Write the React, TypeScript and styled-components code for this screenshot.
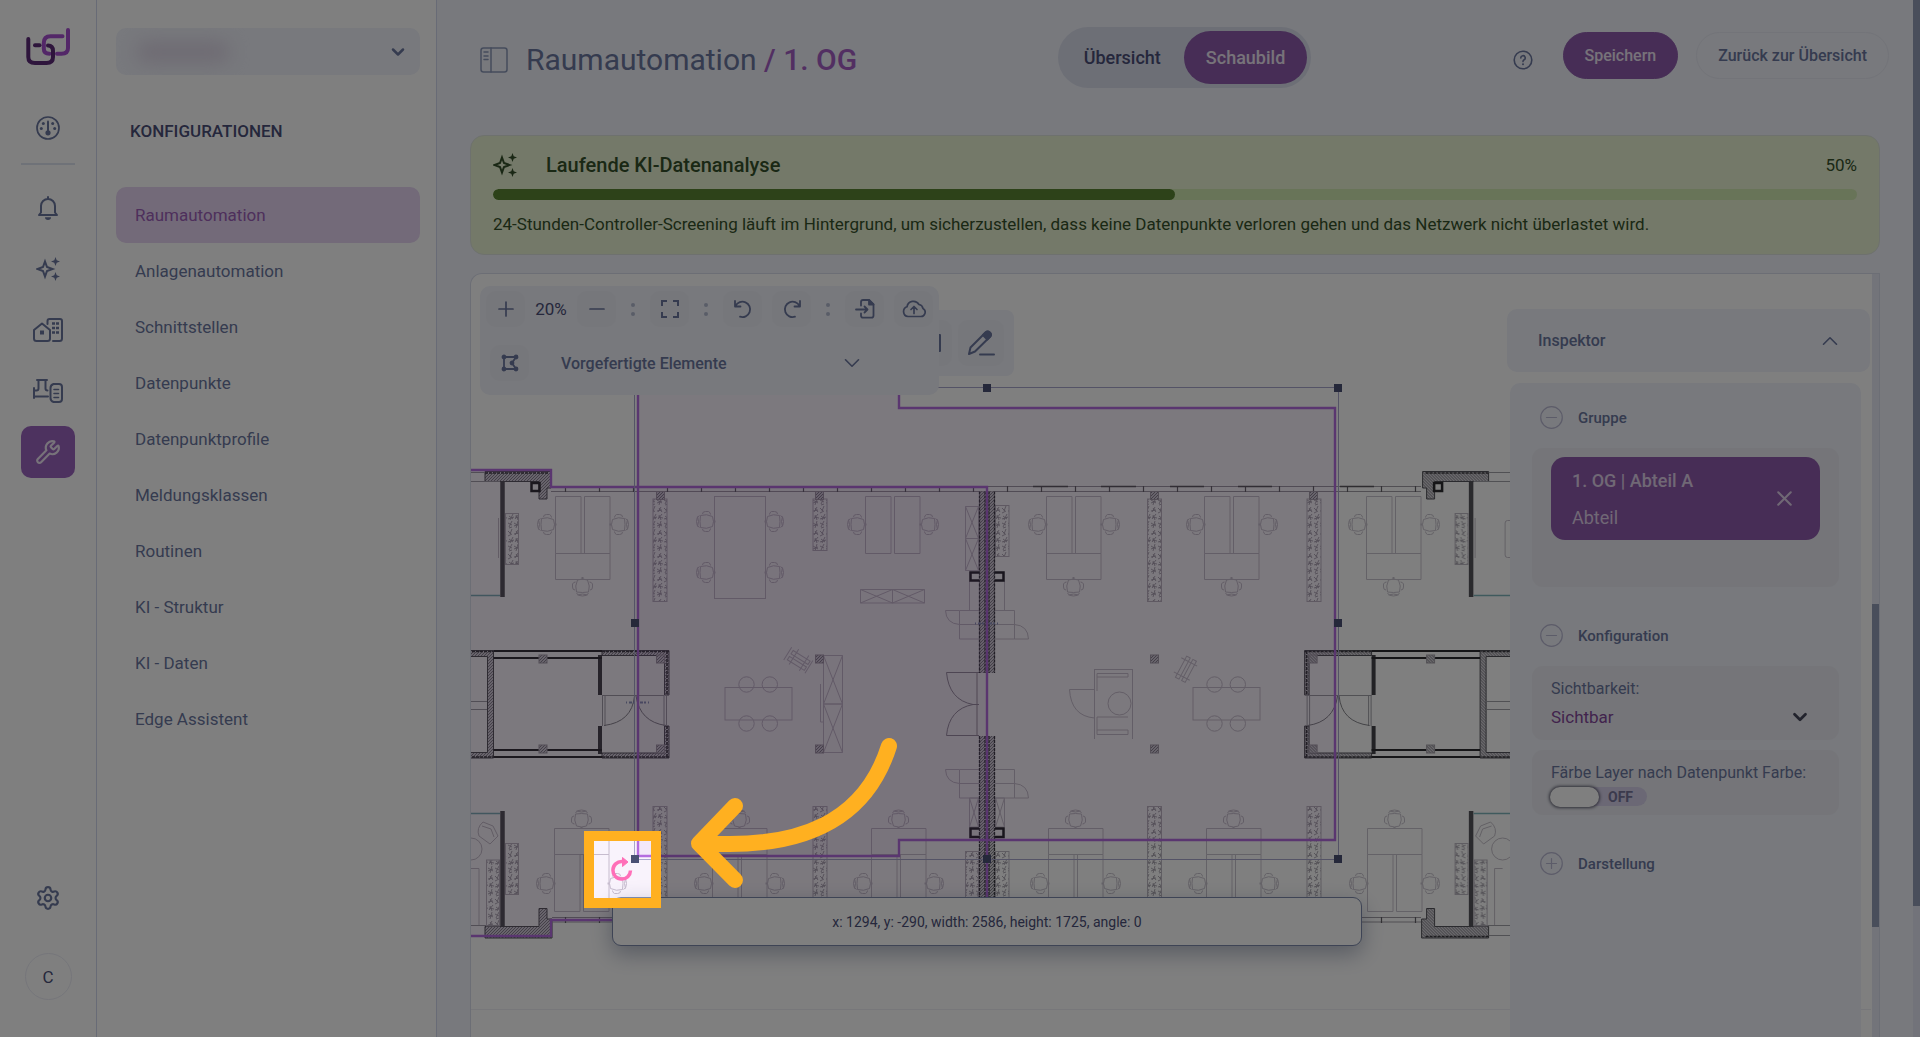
import React from "react";
import styled, { createGlobalStyle } from "styled-components";
import { Settings, Wrench, X, Plus, Minus, ChevronDown, ChevronUp } from "lucide-react";

const c = {
  ink: "#4b4f78",
  slate: "#6b779f",
  purple: "#8e5bac",
  violet: "#9c5fb8",
  page: "#f0f2fa",
  panel: "#f0f2fa",
  tile: "#eaebf2",
  green: "#35502a",
};

const Global = createGlobalStyle`
  *, *::before, *::after { box-sizing: border-box; }
  html, body { margin: 0; background: #fff; }
  body, button, select, input { font-family: Roboto, "Open Sans", sans-serif; }
  button { border: 0; padding: 0; cursor: pointer; }
  a { text-decoration: none; }
`;

const Page = styled.div`
  position: relative;
  display: flex;
  height: 100vh;
  overflow: hidden;
  background: #fff;
  color: ${c.slate};
`;

/* ---------- icon rail ---------- */

const Rail = styled.nav`
  flex: 0 0 97px;
  display: flex;
  flex-direction: column;
  align-items: center;
  padding: 28px 0 37px;
  border-right: 1px solid #d0d6ec;
`;

const Logo = styled.svg`
  width: 44px;
  height: 38px;
  margin-bottom: 36px;
`;

const RailLink = styled.a<{ $active?: boolean }>`
  display: flex;
  align-items: center;
  justify-content: center;
  width: 54px;
  height: 52px;
  margin-bottom: 9px;
  border-radius: 10px;
  color: ${(p) => (p.$active ? "#efe6f4" : c.slate)};
  background: ${(p) => (p.$active ? "#9b64bf" : "transparent")};
`;

const RailRule = styled.hr`
  width: 54px;
  height: 2px;
  margin: 0 0 17px;
  border: 0;
  background: #dfe5f0;
`;

const RailSpacer = styled.div`
  flex: 1;
`;

const Avatar = styled.button`
  width: 47px;
  height: 47px;
  margin-top: 20px;
  border: 1px solid #ebecf5;
  border-radius: 50%;
  background: transparent;
  color: ${c.ink};
  font-size: 17px;
`;

/* ---------- sidebar ---------- */

const Sidebar = styled.aside`
  flex: 0 0 340px;
  display: flex;
  flex-direction: column;
  padding: 28px 16px 0 19px;
  border-right: 1px solid #d0d6ec;
`;

const SitePicker = styled.div`
  position: relative;
  display: flex;
  align-items: center;
  height: 47px;
  border-radius: 10px;
  background: ${c.page};
  overflow: hidden;
`;

const SiteSelect = styled.select`
  appearance: none;
  width: 100%;
  height: 100%;
  padding: 0 40px 0 16px;
  border: 0;
  background: transparent;
  color: ${c.slate};
  font-size: 17px;
`;

const SiteBlur = styled.span`
  position: absolute;
  left: 20px;
  top: 13px;
  width: 94px;
  height: 22px;
  border-radius: 11px;
  background: #ddd6e6;
  filter: blur(9px);
  pointer-events: none;
`;

const PickerArrow = styled.span`
  position: absolute;
  right: 12px;
  display: flex;
  pointer-events: none;
`;

const SidebarTitle = styled.h2`
  margin: 44px 0 44px 14px;
  color: ${c.ink};
  font-size: 17px;
  font-weight: 500;
  line-height: 24px;
`;

const NavItem = styled.a<{ $active?: boolean }>`
  display: flex;
  align-items: center;
  height: 56px;
  padding-left: 19px;
  border-radius: 10px;
  font-size: 17px;
  color: ${(p) => (p.$active ? c.violet : c.slate)};
  background: ${(p) => (p.$active ? "#e6d4f2" : "transparent")};
`;

/* ---------- main column ---------- */

const Main = styled.main`
  flex: 1;
  min-width: 0;
  display: flex;
  flex-direction: column;
  padding: 27px 33px 0;
  background: ${c.page};
`;

const Header = styled.header`
  display: grid;
  grid-template-columns: 1fr auto 1fr;
  height: 108px;
  margin-right: -9px;
  padding-left: 10px;
  align-items: start;
`;

const TitleGroup = styled.div`
  display: flex;
  align-items: center;
  gap: 18px;
  height: 65px;
`;

const Title = styled.h1`
  margin: 0;
  font-size: 30px;
  font-weight: 400;
  line-height: 40px;
  white-space: nowrap;
  color: ${c.slate};
`;

const TitleAccent = styled.span`
  font-weight: 500;
  color: #a55fc4;
`;

const Tabs = styled.div`
  display: flex;
  gap: 1px;
  padding: 4px;
  border-radius: 31px;
  background: #dadeed;
`;

const Tab = styled.button<{ $active?: boolean }>`
  height: 53px;
  padding: 0 22px;
  border-radius: 27px;
  font-size: 18px;
  font-weight: 500;
  color: ${(p) => (p.$active ? "#efe6f4" : c.ink)};
  background: ${(p) => (p.$active ? c.purple : "transparent")};
`;

const Actions = styled.div`
  display: flex;
  align-items: center;
  justify-content: flex-end;
  gap: 18px;
  padding-top: 5px;
`;

const HelpButton = styled.button`
  display: flex;
  margin: 8px 12px 0 0;
  background: transparent;
  color: ${c.slate};
`;

const Pill = styled.button<{ $primary?: boolean }>`
  height: 47px;
  padding: 0 21px;
  border: 1px solid ${(p) => (p.$primary ? c.purple : "#e6e8f2")};
  border-radius: 24px;
  font-size: 16px;
  font-weight: 500;
  white-space: nowrap;
  color: ${(p) => (p.$primary ? "#efe6f4" : c.slate)};
  background: ${(p) => (p.$primary ? c.purple : "transparent")};
`;

/* ---------- analysis banner ---------- */

const Banner = styled.section`
  display: flex;
  flex-direction: column;
  height: 120px;
  padding: 15px 22px 0;
  border: 1px solid #dde3dc;
  border-radius: 14px;
  background: #e8f2d2;
  color: ${c.green};
`;

const BannerHead = styled.div`
  display: flex;
  align-items: center;
  height: 27px;
`;

const BannerTitle = styled.h2`
  flex: 1;
  margin: 0 0 0 29px;
  font-size: 20px;
  font-weight: 500;
`;

const Percent = styled.span`
  font-size: 17px;
`;

const Progress = styled.progress`
  appearance: none;
  width: 100%;
  height: 11px;
  margin: 11px 0 12px;
  border: 0;
  border-radius: 6px;
  overflow: hidden;
  background: #d0e8b0;
  &::-webkit-progress-bar {
    background: #d0e8b0;
  }
  &::-webkit-progress-value {
    border-radius: 6px;
    background: #5a8433;
  }
`;

const BannerText = styled.p`
  margin: 0;
  font-size: 17px;
  line-height: 24px;
`;

/* ---------- canvas ---------- */

const Canvas = styled.section`
  flex: 1;
  min-height: 0;
  display: flex;
  margin-top: 18px;
  border: 1px solid #d8dceb;
  border-bottom: 0;
  border-radius: 12px 0 0 0;
  background: #fff;
`;

const Stage = styled.div`
  position: relative;
  flex: 1;
  display: flex;
  justify-content: space-between;
  padding: 12px 2px 0 9px;
  overflow: hidden;
`;

const Plan = styled.svg`
  position: absolute;
  left: 0;
  top: 0;
  width: 1400px;
  height: 764px;
`;

const Toolbar = styled.div`
  position: relative;
  width: 459px;
  height: 109px;
  padding: 5px 5px 0 6px;
  border-radius: 10px;
  background: ${c.panel};
`;

const ToolRow = styled.div`
  display: flex;
  align-items: center;
  gap: 10px;
`;

const PresetRow = styled.div`
  display: flex;
  align-items: center;
  margin-top: 18px;
  padding: 0 69px 0 4px;
`;

const ToolButton = styled.button<{ $large?: boolean }>`
  display: flex;
  align-items: center;
  justify-content: center;
  flex: none;
  width: ${(p) => (p.$large ? 46 : 39)}px;
  height: ${(p) => (p.$large ? 46 : 36)}px;
  border-radius: 10px;
  background: #edeef6;
  color: ${c.slate};
`;

const Zoom = styled.span`
  width: 32px;
  text-align: center;
  font-size: 17px;
  white-space: nowrap;
  color: ${c.ink};
`;

const Dots = styled.span`
  display: flex;
  flex-direction: column;
  gap: 5px;
  width: 4px;
  margin: 0 5px;
  &::before,
  &::after {
    content: "";
    height: 4px;
    border-radius: 50%;
    background: #b3bacf;
  }
`;

const PresetButton = styled.button`
  flex: 1;
  display: flex;
  align-items: center;
  justify-content: space-between;
  margin-left: 32px;
  background: transparent;
  color: ${c.slate};
  font-size: 16px;
  font-weight: 500;
`;

const DrawBar = styled.div`
  position: absolute;
  left: 420px;
  top: 36px;
  display: flex;
  gap: 6px;
  width: 123px;
  height: 66px;
  padding: 10px 10px 0 15px;
  border-radius: 8px;
  background: ${c.panel};
`;

const Inspector = styled.aside`
  position: relative;
  display: flex;
  flex-direction: column;
  align-items: flex-start;
  width: 363px;
  padding-top: 23px;
`;

const InspectorHead = styled.button`
  display: flex;
  align-items: center;
  justify-content: space-between;
  width: 100%;
  height: 63px;
  padding: 0 27px 0 31px;
  border-radius: 10px;
  background: ${c.panel};
  color: ${c.slate};
  font-size: 16px;
  font-weight: 500;
`;

const InspectorBody = styled.div`
  flex: 1;
  width: 351px;
  margin: 11px 0 0 3px;
  padding: 17px 22px 0;
  border-radius: 10px 10px 0 0;
  background: ${c.panel};
`;

const Section = styled.button`
  display: flex;
  align-items: center;
  gap: 15px;
  height: 35px;
  padding-left: 8px;
  background: transparent;
  color: ${c.slate};
  font-size: 15px;
  font-weight: 500;
`;

const Box = styled.div<{ $h: number; $after: number }>`
  height: ${(p) => p.$h}px;
  margin-bottom: ${(p) => p.$after}px;
  padding: 9px 19px;
  border-radius: 11px;
  background: ${c.tile};
`;

const GroupBox = styled(Box)`
  margin-top: 13px;
`;

const Chip = styled.div`
  display: flex;
  align-items: center;
  justify-content: space-between;
  height: 83px;
  padding: 0 23px 0 21px;
  border-radius: 14px;
  background: ${c.purple};
  color: #e0d0ea;
`;

const ChipText = styled.div`
  font-size: 18px;
  line-height: 37px;
`;

const ChipName = styled.div`
  font-weight: 500;
`;

const ChipClose = styled.button`
  display: flex;
  background: transparent;
  color: #e0d0ea;
`;

const Field = styled.label`
  display: block;
  padding-top: 2px;
  font-size: 16px;
  line-height: 24px;
  white-space: nowrap;
`;

const SelectWrap = styled.div`
  display: flex;
  align-items: center;
  padding-top: 4px;
`;

const Select = styled.select`
  appearance: none;
  flex: 1;
  height: 24px;
  margin-right: -20px;
  padding: 0;
  border: 0;
  background: transparent;
  color: #84479a;
  font-size: 17px;
`;

const SelectIcon = styled.span`
  display: flex;
  margin-right: 9px;
  color: #44465a;
  pointer-events: none;
`;

const Switch = styled.label`
  display: flex;
  align-items: center;
  width: 96px;
  height: 19px;
  margin-top: 2px;
  border-radius: 10px;
  background: #d6d0ea;
`;

const SwitchInput = styled.input`
  appearance: none;
  width: 49px;
  height: 20px;
  margin: 0 9px 0 -1px;
  border-radius: 10px;
  background: #fff;
  box-shadow: 0 0 3px 1px rgba(40, 40, 60, 0.7);
`;

const SwitchText = styled.span`
  font-size: 14px;
  font-weight: 700;
  color: #77759a;
`;

const InfoBar = styled.div`
  position: absolute;
  left: 141px;
  top: 623px;
  display: flex;
  align-items: center;
  justify-content: center;
  width: 750px;
  height: 49px;
  border: 1px solid #7c89ab;
  border-radius: 9px;
  background: #fff;
  box-shadow: 0 8px 22px rgba(60, 75, 110, 0.4);
  color: ${c.ink};
  font-size: 14px;
`;

const InnerTrack = styled.div`
  flex: 0 0 7px;
  padding-top: 330px;
  background: #e6e8f4;
`;

const InnerThumb = styled.div`
  height: 323px;
  background: #929cb6;
`;

const OuterTrack = styled.div`
  flex: 0 0 7px;
  background: #e4e6f4;
`;

const OuterThumb = styled.div`
  height: 906px;
  background: #929cb6;
`;

/* ---------- tour spotlight ---------- */

const Spotlight = styled.div`
  position: absolute;
  left: 584px;
  top: 831px;
  width: 77px;
  height: 77px;
  border: 10px solid #ffb020;
  box-shadow: 0 0 0 3000px rgba(0, 0, 0, 0.5);
  pointer-events: none;
`;

const TourArrow = styled.svg`
  position: absolute;
  left: 680px;
  top: 730px;
  width: 230px;
  height: 170px;
  pointer-events: none;
`;

/* ---------- icons ---------- */

const stroke = {
  fill: "none",
  stroke: "currentColor",
  strokeWidth: 2,
  strokeLinecap: "round" as const,
  strokeLinejoin: "round" as const,
};

const LogoMark = () => (
  <Logo viewBox="26 28 44 38" {...stroke} strokeWidth={4} aria-label="Logo" role="img">
    <path d="M62.5 36.3H50.5Q43.8 36.3 43.8 43V48.5Q43.8 53.8 49.5 53.8" stroke="#a64fd0" />
    <path d="M57 53.8H61.5Q68 53.8 68 48V30" stroke="#a64fd0" />
    <path d="M28.3 39V57Q28.3 63 35 63H46.5Q53 63 53 57V51Q53 45.5 48 45.5" stroke="#5c2a78" />
    <path d="M35 45.3H39.5" stroke="#5c2a78" />
  </Logo>
);

const GaugeIcon = () => (
  <svg width="24" height="24" viewBox="0 0 24 24" {...stroke}>
    <circle cx="12" cy="12" r="11" strokeWidth="1.7" />
    <path d="M12 5.5V15" />
    <circle cx="12" cy="16.8" r="2.6" fill="currentColor" stroke="none" />
    {[[5.3, 12.5], [18.7, 12.5], [7.3, 7.5], [16.7, 7.5]].map(([x, y]) => (
      <circle key={x} cx={x} cy={y} r="1.5" fill="currentColor" stroke="none" />
    ))}
  </svg>
);

const BellIcon = () => (
  <svg width="24" height="24" viewBox="0 0 24 24" {...stroke}>
    <path d="M12 1V3M3 19H21L19 16.5V10A7 7 0 0 0 5 10V16.5Z" />
    <path d="M9 21.3H15A3 2.7 0 0 1 9 21.3Z" fill="currentColor" stroke="none" />
  </svg>
);

const SparkIcon = () => (
  <svg width="24" height="24" viewBox="0 0 24 24" {...stroke}>
    <path d="M9 4.5L11 10L16.5 12L11 14L9 19.5L7 14L1.5 12L7 10Z" strokeLinejoin="miter" />
    <path
      d="M19.5 0L20.7 3.3L24 4.5L20.7 5.7L19.5 9L18.3 5.7L15 4.5L18.3 3.3ZM19.5 15L20.7 18.3L24 19.5L20.7 20.7L19.5 24L18.3 20.7L15 19.5L18.3 18.3Z"
      fill="currentColor"
      stroke="none"
    />
  </svg>
);

const BuildingIcon = () => (
  <svg width="30" height="24" viewBox="0 0 30 24" {...stroke}>
    <path d="M1 12L9 5.5L17 12V20.5Q17 23 14.5 23H3.5Q1 23 1 20.5Z" />
    <path d="M14.5 6V3Q14.5 1 16.5 1H27Q29 1 29 3V20.5Q29 23 26.5 23H20" />
    <rect x="7" y="12.5" width="4" height="4" fill="currentColor" stroke="none" />
    {[5.5, 10, 14.5].map((y) => (
      <path key={y} d={`M19 ${y}h3M23 ${y}h3`} strokeWidth="2.5" strokeLinecap="butt" />
    ))}
  </svg>
);

const PlantIcon = () => (
  <svg width="30" height="24" viewBox="0 0 30 24" {...stroke}>
    <path d="M4 1H14M5.5 1V9.5Q5.5 11.5 3.5 11.5H1.5M12.5 1V9.5Q12.5 11.5 14.5 11.5M1 9V19M1 17.5H15" />
    <path d="M20.5 5H26Q29 5 29 8V20Q29 23 26 23H20.5Q17.5 22 17.5 19V9Q17.5 6 20.5 5Z" />
    <path d="M21 10.5H25.5M21 14.5H25.5M21 18.5H25.5" strokeWidth="1.6" />
  </svg>
);

const PanelIcon = () => (
  <svg width="28" height="26" viewBox="0 0 28 26" {...stroke} strokeWidth={1.5} color="#8b98b8">
    <rect x="1" y="1" width="26" height="24" rx="2.5" />
    <path d="M11 1V25M4 5H8M4 9H8M4 12.5H8" />
  </svg>
);

const HelpIcon = () => (
  <svg width="20" height="20" viewBox="0 0 20 20" {...stroke} strokeWidth={1.6}>
    <circle cx="10" cy="10" r="8.8" />
    <path d="M7.8 8A2.2 2.2 0 1 1 10.8 9.9Q10 10.4 10 11.6" />
    <circle cx="10" cy="14.3" r="1" fill="currentColor" stroke="none" />
  </svg>
);

const FrameIcon = () => (
  <svg width="18" height="18" viewBox="0 0 18 18" {...stroke} strokeLinecap="butt" strokeLinejoin="miter">
    <path d="M1 6V1H6M12 1H17V6M17 12V17H12M6 17H1V12" />
  </svg>
);

const UndoIcon = ({ flip }: { flip?: boolean }) => (
  <svg width="20" height="20" viewBox="0 0 20 20" {...stroke} strokeWidth={1.8}>
    <g transform={flip ? "translate(20 0) scale(-1 1)" : undefined}>
      <path d="M2 2V7.5H7.5M2.5 7A7.7 7.7 0 1 1 7 17.7" />
    </g>
  </svg>
);

const ImportIcon = () => (
  <svg width="20" height="20" viewBox="0 0 20 20" {...stroke} strokeWidth={1.8}>
    <path d="M6 6.5V3Q6 1 8 1H14L18.5 5.5V16.5Q18.5 18.7 16.5 18.7H8Q6 18.7 6 16.5V14.5" />
    <path d="M14 1V5.5H18.5Z" fill="currentColor" />
    <path d="M1 10.5H12M9.5 7.5L12.5 10.5L9.5 13.5" />
  </svg>
);

const CloudIcon = () => (
  <svg width="24" height="20" viewBox="0 0 24 20" {...stroke} strokeWidth={1.7}>
    <path d="M6 17.5A5 5 0 0 1 5 7.8A6.5 6.5 0 0 1 17 5.5A5 5 0 0 1 21 9.5A4.3 4.3 0 0 1 18.5 17.5Z" />
    <path d="M12 14.5V8M9 10.5L12 7.5L15 10.5" />
  </svg>
);

const PolygonIcon = () => (
  <svg width="18" height="18" viewBox="0 0 18 18" {...stroke} strokeWidth={1.8}>
    <path d="M3 3H15L11 9L15 15H3Z" />
    {[[3, 3], [15, 3], [3, 15], [15, 15], [11, 9]].map(([x, y]) => (
      <circle key={`${x}-${y}`} cx={x} cy={y} r="1.5" fill="currentColor" />
    ))}
  </svg>
);

const PencilIcon = () => (
  <svg width="28" height="26" viewBox="0 0 28 26" {...stroke}>
    <path d="M2 24L3.5 17.5L18.5 2.5Q20.5 0.8 22.5 2.5Q25 4.5 23 6.8L8 21.5Z" />
    <path d="M16 5L18.8 2.2Q20.8 0.5 23 2.5Q25 4.8 23 6.8L20.3 9.5Z" fill="currentColor" />
    <path d="M13 24.5H27" />
  </svg>
);

const CircleIcon = ({ plus }: { plus?: boolean }) => (
  <svg width="23" height="23" viewBox="0 0 23 23" {...stroke} strokeWidth={1.2} color="#b9b8d2">
    <circle cx="11.5" cy="11.5" r="10.8" />
    <path d={plus ? "M6.5 11.5H16.5M11.5 6.5V16.5" : "M6.5 11.5H16.5"} />
  </svg>
);

/* ---------- floor plan ---------- */

const Chair = ({ x, y, r = 0 }: { x: number; y: number; r?: number }) => (
  <g transform={`translate(${x} ${y}) rotate(${r})`}>
    <path d="M-5 -6Q1 -8 7 -5Q9 0 7 5Q1 8 -5 6Q-6 0 -5 -6Z" />
    <path d="M-6 -6Q-9 -5 -9 0T-6 6M-8 -5Q-6 0 -8 5M-3 -7.5Q-3 -10 0 -10H3Q5 -9 5 -7M-3 7.5Q-3 10 0 10H3Q5 9 5 7" />
    <path d="M8 0H10" strokeWidth="2" />
  </g>
);

const Desk = ({ x, chairs = true }: { x: number; chairs?: boolean }) => (
  <g>
    <path d={`M${x} 496.5h25.5v57h-25.5zM${x + 29} 496.5h25.5v57h-25.5z`} />
    <Chair x={x - 9} y={524.5} />
    <Chair x={x + 64} y={524.5} r={180} />
    {chairs && (
      <>
        <path d={`M${x} 553.5h54.5v26h-54.5z`} />
        <Chair x={x + 27} y={587} r={-90} />
      </>
    )}
  </g>
);

const LowDesk = ({ x }: { x: number }) => (
  <g>
    <path d={`M${x} 828.5h54.5v26h-54.5zM${x} 854.5h25.5v57h-25.5zM${x + 29} 854.5h25.5v57h-25.5z`} />
    <Chair x={x + 27} y={819} r={90} />
    <Chair x={x - 9} y={883.5} />
    <Chair x={x + 63} y={883.5} r={180} />
  </g>
);

const Crossed = ({ x, y, w, h }: { x: number; y: number; w: number; h: number }) => (
  <path d={`M${x} ${y}h${w}v${h}h${-w}zl${w} ${h}M${x + w} ${y}l${-w} ${h}`} />
);

const RoundTable = ({ x }: { x: number }) => (
  <g>
    <rect x={x} y="687.5" width="67" height="32.5" />
    {[21.5, 44.8].map((d) => (
      <g key={d}>
        <circle cx={x + d} cy="684.5" r="7.7" />
        <circle cx={x + d} cy="723.5" r="7.7" />
      </g>
    ))}
  </g>
);

/* Outer walls, stair core and meeting rooms of one wing; the other wing mirrors it. */
const Wing = () => (
  <g>
    <g fill="url(#hatch)" stroke="#55555c" strokeWidth="1">
      <path d="M485 471.5H551V488H547V499H539V481.5H485Z" />
      <path d="M485 938H552V919H547V908.5H539V926.5H485Z" />
      <path d="M460 650.5H493.5V758H460V752.5H487.5V656.5H460Z" />
      <path d="M602 650.5H669V695H664.5V655.5H602Z" />
      <path d="M602 758H669V726H664.5V753H602Z" />
    </g>
    <path
      d="M485 473H549M485 936.5H549M667 651V695M667 726V757M602 651.5H669M602 757H669M460 651.5H493M460 757H493"
      stroke="#3c3c42"
      strokeWidth="1.6"
      strokeDasharray="3 1"
    />
    <g stroke="#2c2c30" fill="none">
      <path d="M502.5 482V597M502.5 811V927" stroke="#54545a" strokeWidth="4.5" />
      <path d="M600 655V695M600 726V754" stroke="#44444a" strokeWidth="4" />
      <path d="M493.5 651H602M493.5 658H602M493.5 750H602M493.5 757H602" strokeWidth="2" />
      <rect x="531.5" y="483" width="8" height="8" strokeWidth="2.5" />
    </g>
    <g stroke="#a2a2a8" fill="none">
      <path d="M460 472.5H485M460 481.5H500M460 701.5H487M460 709.5H487M460 925.5H500M460 935.5H485" />
      <path d="M602 695.5H664M602.5 695V726M605 695V726M664 695V726M666.5 695V726" />
      <path d="M634.5 696Q632 722 604 725.5M636 696Q640 722 666 725.5" stroke="#88888e" />
    </g>
    <path d="M460 595.5H500M460 813.5H500" stroke="#7fb4ba" strokeWidth="1.5" />
    <g fill="url(#plants)" stroke="#bfbac4">
      <rect x="505.5" y="513.5" width="13" height="51" />
      <rect x="505.5" y="843.5" width="13" height="51" />
      <rect x="486.5" y="860" width="13" height="66" />
    </g>
    <g stroke="#c6c1ca" fill="none">
      <path d="M483 822L493 826L498 836L490 844L479 836Q476 828 483 822ZM482 826L491 829L494 837" />
      <circle cx="471" cy="849" r="11" />
      <path d="M471 868.5H479V925M498.5 518V558" />
    </g>
    <g fill="url(#hatch)" stroke="#a5a1a9">
      <rect x="539" y="655" width="8" height="8" />
      <rect x="656.5" y="655" width="8" height="8" />
      <rect x="539" y="745" width="8" height="8" />
      <rect x="656.5" y="745" width="8" height="8" />
    </g>
  </g>
);

const ticks = Array.from({ length: 26 }, (_, i) => 565.5 + i * 34);
const handles = [
  [987, 388],
  [1338, 388],
  [635, 623],
  [1338, 623],
  [635, 859],
  [987, 859],
  [1338, 859],
];

const FloorPlan = () => (
  <Plan viewBox="471 274 1400 764" role="img" aria-label="Grundriss 1. OG">
    <defs>
      <pattern id="hatch" width="3" height="3" patternUnits="userSpaceOnUse">
        <rect width="3" height="3" fill="#d4d2d8" />
        <path d="M0 3L3 0" stroke="#85838b" strokeWidth="1" />
      </pattern>
      <pattern id="plants" width="13" height="23" patternUnits="userSpaceOnUse">
        <path
          d="M1 2l3 3M5 0l-2 5M1 7l4 -2M9 2l3 4M11 1l-3 5M7 5l5 -1M2 10l4 3M6 8l-3 6M1 13l6 -2M9 9l2 5M12 8l-4 5M8 11l5 1M1 17l4 2M5 15l-3 6M7 17l5 3M11 15l-2 7M7 20l5 -2M2 22l3 -1"
          stroke="#a6a1ab"
          strokeWidth="0.9"
          fill="none"
        />
      </pattern>
      <clipPath id="sheet">
        <rect x="471" y="274" width="1042" height="764" />
      </clipPath>
    </defs>
    <path d="M471 1009.5H1872" stroke="#efeff4" />
    <g clipPath="url(#sheet)">
      <Wing />
      <g transform="translate(1973.6 0) scale(-1 1)">
        <Wing />
        <path d="M460 520.5H466Q468.5 520.5 468.5 523V555Q468.5 557.5 466 557.5H460" stroke="#c6c1ca" fill="none" />
      </g>

      <g stroke="#a29ea6" fill="none">
        <path d="M551 486.5H1421M551 491.5H1421" />
        <path d="M552 917.5H1421M552 922H1421" />
        {ticks.map((x) => (
          <path key={x} d={`M${x} 486V492M${x} 917V923`} stroke="#66646a" strokeWidth="1.2" />
        ))}
        <path
          d="M1033 486.5H1068M1101 486.5H1136M1170 486.5H1204M1238 486.5H1272M1340 486.5H1374"
          stroke="#5c5a60"
          strokeWidth="1.4"
        />
      </g>

      <g stroke="#c9c4ce" fill="none" strokeWidth="1">
        {[555.5, 1046.5, 1204.5, 1366.5].map((x) => (
          <Desk key={x} x={x} />
        ))}
        <Desk x={865.5} chairs={false} />
        {[554.5, 712.5, 871.5, 1048.5, 1206.5, 1367.5].map((x) => (
          <LowDesk key={x} x={x} />
        ))}
        <rect x="714.5" y="496.5" width="51" height="102" />
        <Chair x={705.5} y={521.5} />
        <Chair x={705.5} y={572.5} />
        <Chair x={774.5} y={521.5} r={180} />
        <Chair x={774.5} y={572.5} r={180} />
        <Crossed x={860.5} y={589.5} w={32} h={13.5} />
        <Crossed x={892.5} y={589.5} w={32} h={13.5} />
        <Crossed x={965.5} y={506.5} w={13} h={32} />
        <Crossed x={965.5} y={538.5} w={13} h={32} />
        <Crossed x={823.5} y={655.5} w={19} h={48.5} />
        <Crossed x={823.5} y={704} w={19} h={48.5} />
        <Crossed x={969.5} y={798} w={9} h={29} />
        <Crossed x={995.5} y={798} w={9} h={29} />
        <path d="M820.5 684V722H823M969.5 581V610M1004.5 581V610" />
        {[610.5, 769.5].map((y) => (
          <path
            key={y}
            d={`M959.5 ${y}H1014.5V${y + 28.5}H959.5V${y}M945.5 ${y}H959.5M945.5 ${y}Q946 ${y + 13} 959.5 ${y + 14}H1014.5Q1028 ${y + 15} 1028.5 ${y + 28.5}H1014.5`}
          />
        ))}
        <RoundTable x={725} />
        <RoundTable x={1193} />
        <g transform="translate(799 660) rotate(32)">
          <path d="M-10 -5H10V-1H-10ZM-10 2H10V6H-10ZM-13 -7V8M12 -7V8M-6 -9V9M6 -9V9" />
        </g>
        <g transform="translate(1185.5 669) rotate(-62)">
          <path d="M-12 -5H12V-1H-12ZM-12 2H12V6H-12ZM-8 -9V9M8 -9V9" />
        </g>
        <path d="M1094.5 669V739M1132.5 669V739M1094.5 669.5H1132.5M1097 673.5H1128V677H1097ZM1097 730H1128V734.5H1097ZM1097 677V691M1097 717H1128M1097 717V730M1069.5 689.5H1094M1069.5 689.5Q1071 716 1094.5 718" />
        <circle cx="1119.5" cy="703.5" r="11.5" />
        <path d="M979 672.5H946.5Q949 700 973 704.5H979M979 735.5H946.5Q949 709 973 704.5M977 673V736" stroke="#99959f" />
      </g>

      <g fill="url(#plants)" stroke="#bfbac4">
        <rect x="653" y="499" width="14" height="102.5" />
        <rect x="813" y="499" width="14" height="51.5" />
        <rect x="1147.5" y="499" width="14" height="102.5" />
        <rect x="1307" y="499" width="14" height="102.5" />
        <rect x="995.5" y="505.5" width="13.5" height="51" />
        <rect x="653" y="806.5" width="14" height="102" />
        <rect x="813" y="806.5" width="14" height="102" />
        <rect x="1147.5" y="806.5" width="14" height="102" />
        <rect x="1307" y="806.5" width="14" height="102" />
        <rect x="965.5" y="851.5" width="13" height="60" />
        <rect x="995.5" y="851.5" width="13.5" height="60" />
      </g>
      <g fill="url(#hatch)" stroke="#a5a1a9">
        {[656.5, 815.5, 1150.5, 1309.5].map((x) => (
          <rect key={x} x={x} y="491.5" width="8" height="8" />
        ))}
        {[815.5, 1150.5].map((x) => (
          <React.Fragment key={x}>
            <rect x={x} y="655" width="8" height="8" />
            <rect x={x} y="745" width="8" height="8" />
          </React.Fragment>
        ))}
      </g>

      {[
        [491.5, 181.5],
        [736, 186],
      ].map(([y, h]) => (
        <g key={y} fill="url(#hatch)">
          <rect x="979" y={y} width="7" height={h} />
          <rect x="988" y={y} width="7" height={h} />
          <path
            d={`M979.5 ${y}v${h}M985 ${y}v${h}M989 ${y}v${h}M994.5 ${y}v${h}`}
            stroke="#3a3a40"
            strokeWidth="1.3"
            strokeDasharray="3 1"
          />
        </g>
      ))}
      <g stroke="#26262c" strokeWidth="2.5" fill="none">
        <path d="M979 572.5H970.5V580.5H979M995 572.5H1003.5V580.5H995" />
        <path d="M979 828.5H970.5V837H979M995 828.5H1003.5V837H995" />
      </g>
      <g stroke="#8d97bd" strokeWidth="2" strokeDasharray="1 2 3 1 2 2">
        <path d="M626 702.5H650M975 623.5H999" />
      </g>

      <g fill="rgba(176, 104, 218, 0.08)" stroke="#b56ce0" strokeWidth="2.4">
        <path d="M460 470H551V487H987V920H551V936H460Z" />
        <path d="M638 380V856H899V840H1335V408H899V380Z" />
      </g>
      <rect x="634.5" y="387.5" width="704" height="472" fill="none" stroke="#a9a6cc" />
      {handles.map(([x, y]) => (
        <rect key={`${x}-${y}`} x={x - 4} y={y - 4} width="8" height="8" fill="#4a5074" />
      ))}
      <g fill="none" stroke="#ff6fb8" strokeWidth="3.5">
        <path d="M630.5 870.5A8.8 8.8 0 1 1 622 861.5" />
        <path d="M622.5 857.5L628 862L622.5 866.5Z" fill="#ff6fb8" strokeWidth="1" />
      </g>
    </g>
  </Plan>
);

const navItems = [
  "Raumautomation",
  "Anlagenautomation",
  "Schnittstellen",
  "Datenpunkte",
  "Datenpunktprofile",
  "Meldungsklassen",
  "Routinen",
  "KI - Struktur",
  "KI - Daten",
  "Edge Assistent",
];

export default function App() {
  return (
    <>
      <Global />
      <Page>
        <Rail aria-label="Hauptnavigation">
          <LogoMark />
          <RailLink href="#dashboard" aria-label="Dashboard"><GaugeIcon /></RailLink>
          <RailRule />
          <RailLink href="#meldungen" aria-label="Meldungen"><BellIcon /></RailLink>
          <RailLink href="#ki" aria-label="KI"><SparkIcon /></RailLink>
          <RailLink href="#gebaeude" aria-label="Gebäude"><BuildingIcon /></RailLink>
          <RailLink href="#anlagen" aria-label="Anlagen"><PlantIcon /></RailLink>
          <RailLink href="#konfiguration" aria-label="Konfiguration" $active>
            <Wrench size={26} strokeWidth={2} />
          </RailLink>
          <RailSpacer />
          <RailLink href="#einstellungen" aria-label="Einstellungen"><Settings size={26} /></RailLink>
          <Avatar>C</Avatar>
        </Rail>

        <Sidebar>
          <SitePicker>
            <SiteBlur />
            <SiteSelect aria-label="Standort">
              <option value=""></option>
            </SiteSelect>
            <PickerArrow><ChevronDown size={20} strokeWidth={3} /></PickerArrow>
          </SitePicker>
          <SidebarTitle>KONFIGURATIONEN</SidebarTitle>
          {navItems.map((item, i) => (
            <NavItem key={item} href="#" $active={i === 0}>{item}</NavItem>
          ))}
        </Sidebar>

        <Main>
          <Header>
            <TitleGroup>
              <PanelIcon />
              <Title>Raumautomation <TitleAccent>/ 1. OG</TitleAccent></Title>
            </TitleGroup>
            <Tabs>
              <Tab>Übersicht</Tab>
              <Tab $active>Schaubild</Tab>
            </Tabs>
            <Actions>
              <HelpButton aria-label="Hilfe"><HelpIcon /></HelpButton>
              <Pill $primary>Speichern</Pill>
              <Pill>Zurück zur Übersicht</Pill>
            </Actions>
          </Header>

          <Banner>
            <BannerHead>
              <SparkIcon />
              <BannerTitle>Laufende KI-Datenanalyse</BannerTitle>
              <Percent>50%</Percent>
            </BannerHead>
            <Progress value={50} max={100} aria-label="Fortschritt der Analyse" />
            <BannerText>
              24-Stunden-Controller-Screening läuft im Hintergrund, um sicherzustellen, dass keine Datenpunkte verloren gehen und das Netzwerk nicht überlastet wird.
            </BannerText>
          </Banner>

          <Canvas>
            <Stage>
              <FloorPlan />
              <DrawBar>
                <ToolButton $large aria-label="Auswahl">
                  <svg width="24" height="18" viewBox="0 0 24 18" {...stroke}><path d="M1 1H23V17H1Z" /></svg>
                </ToolButton>
                <ToolButton $large aria-label="Bearbeiten"><PencilIcon /></ToolButton>
              </DrawBar>
              <InfoBar>x: 1294, y: -290, width: 2586, height: 1725, angle: 0</InfoBar>
              <Toolbar>
                <ToolRow>
                  <ToolButton aria-label="Vergrößern"><Plus size={24} strokeWidth={1.7} /></ToolButton>
                  <Zoom>20%</Zoom>
                  <ToolButton aria-label="Verkleinern"><Minus size={24} strokeWidth={1.7} /></ToolButton>
                  <Dots />
                  <ToolButton aria-label="Einpassen"><FrameIcon /></ToolButton>
                  <Dots />
                  <ToolButton aria-label="Rückgängig"><UndoIcon /></ToolButton>
                  <ToolButton aria-label="Wiederholen"><UndoIcon flip /></ToolButton>
                  <Dots />
                  <ToolButton aria-label="Importieren"><ImportIcon /></ToolButton>
                  <ToolButton aria-label="Hochladen"><CloudIcon /></ToolButton>
                </ToolRow>
                <PresetRow>
                  <ToolButton aria-label="Polygon"><PolygonIcon /></ToolButton>
                  <PresetButton>
                    Vorgefertigte Elemente
                    <ChevronDown size={26} strokeWidth={1.5} />
                  </PresetButton>
                </PresetRow>
              </Toolbar>

              <Inspector>
                <InspectorHead>
                  Inspektor
                  <ChevronUp size={26} strokeWidth={1.5} />
                </InspectorHead>
                <InspectorBody>
                  <Section><CircleIcon />Gruppe</Section>
                  <GroupBox $h={139} $after={31}>
                    <Chip>
                      <ChipText>
                        <ChipName>1. OG | Abteil A</ChipName>
                        Abteil
                      </ChipText>
                      <ChipClose aria-label="Entfernen"><X size={25} strokeWidth={2} /></ChipClose>
                    </Chip>
                  </GroupBox>
                  <Section><CircleIcon />Konfiguration</Section>
                  <GroupBox $h={74} $after={10}>
                    <Field htmlFor="visibility">Sichtbarkeit:</Field>
                    <SelectWrap>
                      <Select id="visibility">
                        <option>Sichtbar</option>
                      </Select>
                      <SelectIcon><ChevronDown size={22} strokeWidth={3} /></SelectIcon>
                    </SelectWrap>
                  </GroupBox>
                  <Box $h={65} $after={31}>
                    <Field htmlFor="layer-color">Färbe Layer nach Datenpunkt Farbe:</Field>
                    <Switch>
                      <SwitchInput id="layer-color" type="checkbox" />
                      <SwitchText>OFF</SwitchText>
                    </Switch>
                  </Box>
                  <Section><CircleIcon plus />Darstellung</Section>
                </InspectorBody>
              </Inspector>
            </Stage>
            <InnerTrack><InnerThumb /></InnerTrack>
          </Canvas>
        </Main>
        <OuterTrack><OuterThumb /></OuterTrack>

        <Spotlight />
        <TourArrow viewBox="680 730 230 170">
          <path
            d="M889 746C865 822 800 850 702 843M735 806L699 843.5L735 880"
            fill="none"
            stroke="#ffb020"
            strokeWidth="16"
            strokeLinecap="round"
            strokeLinejoin="round"
          />
        </TourArrow>
      </Page>
    </>
  );
}
